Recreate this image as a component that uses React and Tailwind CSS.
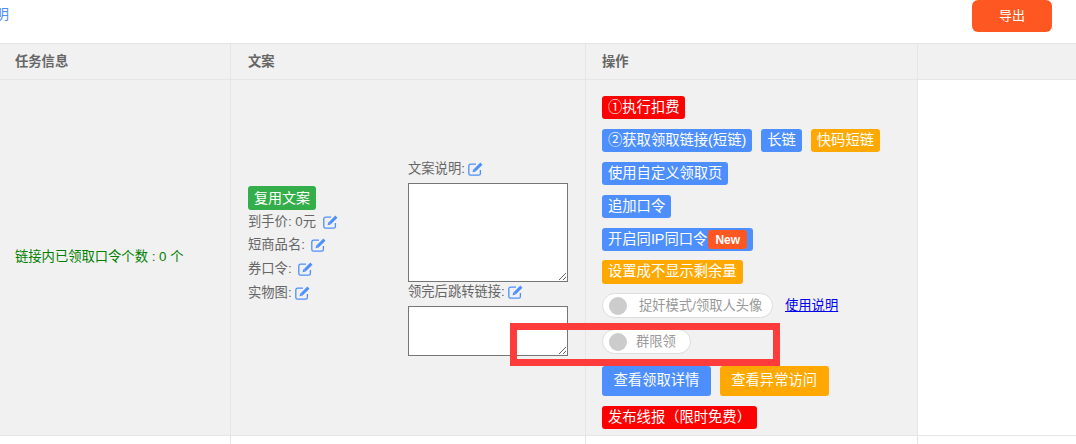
import React from 'react';

const font = '[font-family:"Liberation_Sans","Noto_Sans_CJK_SC",sans-serif]';

function Btn({ color, className = 'h-[23px]', children }) {
    return (
        <span className={`inline-flex items-center px-1.5 rounded-[3px] text-[14.3px] text-white whitespace-nowrap ${color} ${className}`}>
            {children}
        </span>
    );
}

function Edit({ className = '' }) {
    return (
        <svg viewBox="0 0 16 14" className={`w-4 h-[14px] text-[#4e8fff] ${className}`} fill="none" stroke="currentColor">
            <path d="M8 2.2H2.5a1.7 1.7 0 0 0-1.7 1.7v7.6a1.7 1.7 0 0 0 1.7 1.7h8.2a1.7 1.7 0 0 0 1.7-1.7V8" strokeWidth="1.3" />
            <path d="M6.8 8.2 13.4 1.6" strokeWidth="3" />
            <path d="M4.6 10.2 5.3 7l2.6 2.6z" fill="currentColor" stroke="none" />
        </svg>
    );
}

function Toggle({ width, gap, children }) {
    return (
        <div className={`flex items-center h-[25px] pl-1.5 border border-[#ddd] rounded-full bg-white text-[13.3px] text-[#999] whitespace-nowrap ${width}`}>
            <span className="w-[18px] h-[18px] rounded-full bg-[#ccc]"></span>
            <span className={gap}>{children}</span>
        </div>
    );
}

export default function App() {
    return (
        <div className={`relative w-[1076px] h-[444px] overflow-hidden bg-white text-[13.3px] ${font}`}>
            <div className="flex justify-between items-start h-[43px] pr-6">
                <a className="-ml-[19px] mt-[4px] text-[14px] text-[#4e8fff]">说明</a>
                <button className="w-20 h-8 rounded-md bg-[#ff5722] text-white text-[13px]">导出</button>
            </div>

            <div className="grid grid-cols-[231px_355px_332px_1fr] h-[37px] bg-[#f1f1f1] border-y border-[#e6e6e6] font-bold text-[#666]">
                <div className="flex items-center pl-[15px] border-r border-[#e6e6e6]">任务信息</div>
                <div className="flex items-center pl-[17px] border-r border-[#e6e6e6]">文案</div>
                <div className="flex items-center pl-4 border-r border-[#e6e6e6]">操作</div>
                <div></div>
            </div>

            <div className="grid grid-cols-[231px_355px_332px_1fr] h-[356px] border-b border-[#e6e6e6]">
                <div className="flex items-center pl-[15px] pb-[2px] bg-[#f1f1f1] border-r border-[#e6e6e6] text-[#008000]">
                    链接内已领取口令个数 : 0 个
                </div>

                <div className="flex items-start pl-[17px] pt-[83px] bg-[#f1f1f1] border-r border-[#e6e6e6] text-[#666]">
                    <div className="w-[160px] mt-[23px] flex flex-col items-start">
                        <span className="flex items-center justify-center w-[68px] h-6 -mb-[1px] rounded-[3px] bg-[#34ae4a] text-[14px] text-white">复用文案</span>
                        <div className="h-6 pt-0.5 flex items-center">到手价: 0元<Edit className="ml-[7px]" /></div>
                        <div className="h-6 flex items-center">短商品名:<Edit className="ml-1.5" /></div>
                        <div className="h-6 flex items-center">券口令:<Edit className="ml-1.5" /></div>
                        <div className="h-6 flex items-center">实物图:<Edit className="ml-[3px]" /></div>
                    </div>
                    <div className="w-40 flex flex-col">
                        <div className="h-5 pb-2 flex items-center">文案说明:<Edit className="ml-[3px]" /></div>
                        <textarea className="block w-40 h-[99px] border border-[#767676] bg-white"></textarea>
                        <div className="h-6 pb-1 flex items-center">领完后跳转链接:<Edit className="ml-[3px]" /></div>
                        <textarea className="block w-40 h-[50px] border border-[#767676] bg-white"></textarea>
                    </div>
                </div>

                <div className="flex flex-col items-start gap-[10px] pl-4 pt-4 bg-[#f1f1f1] border-r border-[#e6e6e6]">
                    <Btn color="bg-[#ff0000]">①执行扣费</Btn>
                    <div className="flex gap-[9px]">
                        <Btn color="bg-[#4e8fff]">②获取领取链接(短链)</Btn>
                        <Btn color="bg-[#4e8fff]">长链</Btn>
                        <Btn color="bg-[#ffa800]">快码短链</Btn>
                    </div>
                    <Btn color="bg-[#4e8fff]">使用自定义领取页</Btn>
                    <Btn color="bg-[#4e8fff]">追加口令</Btn>
                    <Btn color="bg-[#4e8fff]">
                        开启同IP同口令
                        <span className="ml-[1px] flex items-center justify-center w-[39px] h-[19px] rounded-[3px] bg-[#ff5722] text-[12px] font-bold">New</span>
                    </Btn>
                    <Btn color="bg-[#ffa800]" className="h-6 -mt-px">设置成不显示剩余量</Btn>
                    <div className="flex items-center gap-3 -mt-px">
                        <Toggle width="w-[171px]" gap="ml-3">捉奸模式/领取人头像</Toggle>
                        <a className="text-[13.3px] text-[#0000ee] underline">使用说明</a>
                    </div>
                    <div className="mt-px">
                        <Toggle width="w-[89px]" gap="ml-[9px]">群限领</Toggle>
                    </div>
                    <div className="flex gap-[9px] mt-[2px]">
                        <Btn color="bg-[#4e8fff]" className="h-[30px] px-[11.5px]">查看领取详情</Btn>
                        <Btn color="bg-[#ffa800]" className="h-[30px] px-[11.5px]">查看异常访问</Btn>
                    </div>
                    <Btn color="bg-[#ff0000]">发布线报（限时免费）</Btn>
                </div>

                <div></div>
            </div>

            <div className="grid grid-cols-[231px_355px_332px_1fr] h-[8px]">
                <div className="border-r border-[#e6e6e6]"></div>
                <div className="border-r border-[#e6e6e6]"></div>
                <div className="border-r border-[#e6e6e6]"></div>
            </div>

            {/* red annotation box over the screenshot */}
            <div className="absolute left-[510px] top-[323px] w-[270px] h-[43px] border-[7px] border-[#ff3b3b]"></div>
        </div>
    );
}
